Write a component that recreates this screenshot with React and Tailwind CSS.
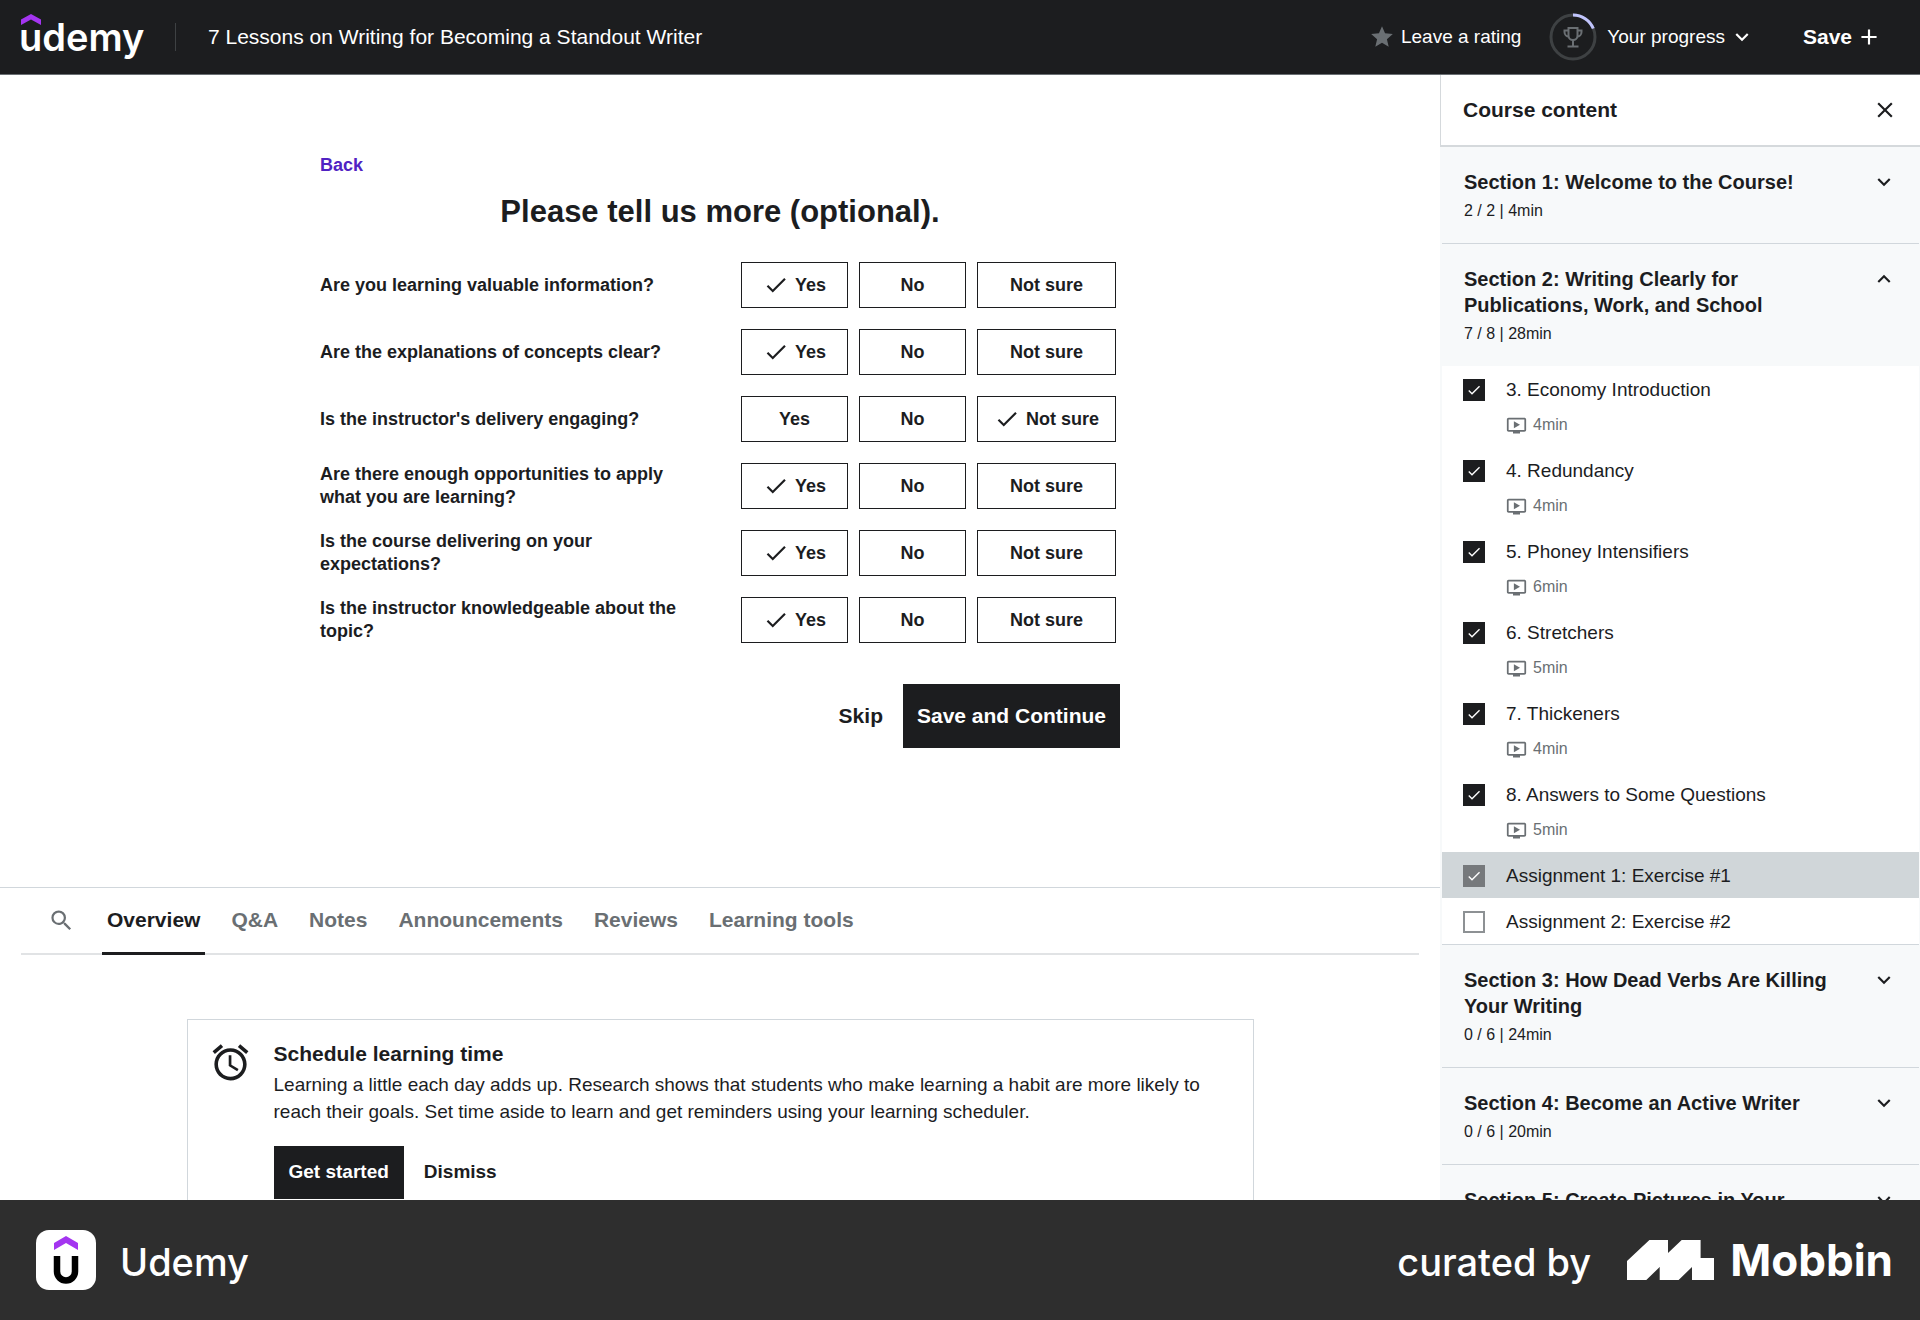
import { useState } from 'react'
import {
  MdAdd,
  MdCheck,
  MdClose,
  MdExpandLess,
  MdExpandMore,
  MdOutlineAccessAlarm,
  MdOutlineOndemandVideo,
  MdSearch,
  MdStar,
} from 'react-icons/md'

const questions = [
  { text: 'Are you learning valuable information?', answer: 'Yes' },
  { text: 'Are the explanations of concepts clear?', answer: 'Yes' },
  { text: "Is the instructor's delivery engaging?", answer: 'Not sure' },
  { text: 'Are there enough opportunities to apply what you are learning?', answer: 'Yes' },
  { text: 'Is the course delivering on your expectations?', answer: 'Yes' },
  { text: 'Is the instructor knowledgeable about the topic?', answer: 'Yes' },
]

const options = ['Yes', 'No', 'Not sure']

const tabs = ['Overview', 'Q&A', 'Notes', 'Announcements', 'Reviews', 'Learning tools']

const sections = [
  { title: 'Section 1: Welcome to the Course!', summary: '2 / 2 | 4min' },
  {
    title: 'Section 2: Writing Clearly for Publications, Work, and School',
    summary: '7 / 8 | 28min',
    open: true,
    items: [
      { title: '3. Economy Introduction', duration: '4min', done: true },
      { title: '4. Redundancy', duration: '4min', done: true },
      { title: '5. Phoney Intensifiers', duration: '6min', done: true },
      { title: '6. Stretchers', duration: '5min', done: true },
      { title: '7. Thickeners', duration: '4min', done: true },
      { title: '8. Answers to Some Questions', duration: '5min', done: true },
      { title: 'Assignment 1: Exercise #1', done: true, current: true },
      { title: 'Assignment 2: Exercise #2', done: false },
    ],
  },
  { title: 'Section 3: How Dead Verbs Are Killing Your Writing', summary: '0 / 6 | 24min' },
  { title: 'Section 4: Become an Active Writer', summary: '0 / 6 | 20min' },
  { title: 'Section 5: Create Pictures in Your' },
]

function UdemyLogo() {
  return (
    <a href="#home" aria-label="Udemy" className="relative block w-[122px]">
      <svg className="absolute left-0 top-0 w-5 h-[11px]" viewBox="0 0 20 11" fill="#a435f0">
        <path d="M10 0L20 5.5V11L10 5.5L0 11V5.5Z" />
      </svg>
      <span className="block -ml-0.5 font-['Inter',sans-serif] text-[38px] leading-[46px] font-semibold text-white">
        udemy
      </span>
    </a>
  )
}

function ProgressRing() {
  return (
    <svg className="w-12 h-12" viewBox="0 0 48 48" fill="none">
      <circle cx="24" cy="24" r="22" stroke="#3e4143" strokeWidth="3" />
      <path d="M24 2A22 22 0 0 1 44.300 15.500" stroke="#c0c4fc" strokeWidth="3" />
      <g stroke="#6a6f73" strokeWidth="2">
        <path d="M19.500 15H28.500V22.500A4.500 4.500 0 0 1 19.500 22.500Z" />
        <path d="M19.500 17.500H15.500V19A4.500 4.500 0 0 0 20 23.500M28.500 17.500H32.500V19A4.500 4.500 0 0 1 28 23.500" />
        <path d="M24 27V33.500M18.500 33.500H29.500" />
      </g>
    </svg>
  )
}

function Header() {
  return (
    <header className="flex items-center h-[75px] shrink-0 pl-[21px] pr-[38px] bg-[#1c1d1f] border-b border-[#6a6f73] text-white">
      <UdemyLogo />
      <div className="w-px h-7 mx-8 bg-[#3e4143]" />
      <h1 className="text-[21px] leading-7">
        <a href="#course">7 Lessons on Writing for Becoming a Standout Writer</a>
      </h1>
      <div className="flex items-center ml-auto">
        <button className="flex items-center gap-1.5 text-[19px]">
          <MdStar className="w-[26px] h-[26px] text-[#6a6f73]" />
          Leave a rating
        </button>
        <button className="flex items-center ml-7 text-[19px]">
          <ProgressRing />
          <span className="ml-2.5">Your progress</span>
          <MdExpandMore className="w-[26px] h-[26px] ml-1" />
        </button>
        <button className="flex items-center gap-1 ml-12 text-[21px] font-bold">
          Save
          <MdAdd className="w-[26px] h-[26px]" />
        </button>
      </div>
    </header>
  )
}

function QuestionRow({ question }) {
  const [answer, setAnswer] = useState(question.answer)

  return (
    <div className="flex items-center justify-between h-[46px]">
      <p className="w-[370px] text-[18px] leading-[23px] font-bold">{question.text}</p>
      <div className="flex gap-[11px] h-full">
        {options.map((option) => (
          <button
            key={option}
            onClick={() => setAnswer(option)}
            aria-pressed={answer === option}
            className={`flex items-center justify-center gap-1.5 border border-[#1c1d1f] text-[18px] font-bold ${
              option === 'Not sure' ? 'w-[139px]' : 'w-[107px]'
            }`}
          >
            {answer === option && <MdCheck className="w-[26px] h-[26px]" />}
            {option}
          </button>
        ))}
      </div>
    </div>
  )
}

function Survey() {
  return (
    <section className="w-full max-w-[800px] mx-auto pt-[77px] pb-[139px]">
      <button className="block text-[18px] leading-[26px] font-bold text-[#5022c3]">Back</button>
      <h2 className="mt-3.5 text-center text-[31px] leading-[40px] font-bold">Please tell us more (optional).</h2>
      <div className="flex flex-col gap-[21px] mt-[30px] pr-1">
        {questions.map((question) => (
          <QuestionRow key={question.text} question={question} />
        ))}
      </div>
      <div className="flex justify-end mt-[41px] text-[21px] font-bold">
        <button className="px-5">Skip</button>
        <button className="h-16 px-3.5 bg-[#1c1d1f] text-white">Save and Continue</button>
      </div>
    </section>
  )
}

function Tabs() {
  const [active, setActive] = useState('Overview')

  return (
    <div className="border-t border-[#d1d7dc] px-[21px]">
      <nav className="flex h-[67px] pl-[27px] border-b-2 border-[#e1e3e5] text-[#6a6f73]">
        <button aria-label="Search" className="pr-[27px]">
          <MdSearch className="w-[27px] h-[27px]" />
        </button>
        {tabs.map((tab) => (
          <button
            key={tab}
            onClick={() => setActive(tab)}
            className={`-mb-0.5 mr-[21px] px-[5px] border-b-[3px] text-[21px] font-bold ${
              active === tab ? 'border-[#1c1d1f] text-[#1c1d1f]' : 'border-transparent'
            }`}
          >
            {tab}
          </button>
        ))}
      </nav>
    </div>
  )
}

function ScheduleCard() {
  return (
    <div className="flex w-full max-w-[1067px] mx-auto mt-16 p-[21px] border border-[#d1d7dc]">
      <MdOutlineAccessAlarm className="shrink-0 w-[43px] h-[43px]" />
      <div className="ml-[22px]">
        <h3 className="text-[21px] leading-[26px] font-bold">Schedule learning time</h3>
        <p className="mt-1 text-[19px] leading-[27px]">
          Learning a little each day adds up. Research shows that students who make learning a habit are more likely to
          reach their goals. Set time aside to learn and get reminders using your learning scheduler.
        </p>
        <div className="flex mt-[21px] text-[19px] font-bold">
          <button className="h-[53px] px-[15px] bg-[#1c1d1f] text-white">Get started</button>
          <button className="px-5">Dismiss</button>
        </div>
      </div>
    </div>
  )
}

function CourseItem({ item }) {
  const [done, setDone] = useState(item.done)

  return (
    <li className={`pl-[21px] pt-[11px] pb-[9px] ${item.current ? 'bg-[#d0d6d9]' : 'bg-white'}`}>
      <label className="flex items-start gap-[21px]">
        <span className="relative mt-0.5 w-[22px] h-[22px] shrink-0">
          <input
            type="checkbox"
            checked={done}
            onChange={() => setDone(!done)}
            className={`block appearance-none w-[22px] h-[22px] border-2 ${
              item.current
                ? 'bg-[#76797c] border-[#76797c]'
                : 'border-[#8d9194] checked:bg-[#1c1d1f] checked:border-[#1c1d1f]'
            }`}
          />
          {done && <MdCheck className="absolute left-[3px] top-[3px] w-4 h-4 text-white pointer-events-none" />}
        </span>
        <span className="block">
          <span className="block text-[19px] leading-[26px]">{item.title}</span>
          {item.duration && (
            <span className="flex items-center gap-1.5 mt-[9px] text-[16px] leading-[26px] text-[#6a6f73]">
              <MdOutlineOndemandVideo className="w-[21px] h-[21px]" />
              {item.duration}
            </span>
          )}
        </span>
      </label>
    </li>
  )
}

function CourseSection({ section }) {
  const [open, setOpen] = useState(Boolean(section.open))

  return (
    <div className="border-b border-[#d1d7dc]">
      <button onClick={() => setOpen(!open)} className="flex w-full px-[22px] py-[22px] bg-[#f7f9fa] text-left">
        <span className="block flex-1">
          <span className="block text-[20px] leading-[26px] font-bold">{section.title}</span>
          {section.summary && <span className="block mt-1.5 text-[16px] leading-5">{section.summary}</span>}
        </span>
        {open ? (
          <MdExpandLess className="w-[26px] h-[26px] ml-8" />
        ) : (
          <MdExpandMore className="w-[26px] h-[26px] ml-8" />
        )}
      </button>
      {open && section.items && (
        <ul>
          {section.items.map((item) => (
            <CourseItem key={item.title} item={item} />
          ))}
        </ul>
      )}
    </div>
  )
}

function Sidebar() {
  return (
    <aside className="w-1/4 shrink-0 bg-[#f7f9fa] overflow-hidden">
      <div className="flex items-center justify-between h-[72px] px-[22px] bg-white border-l border-b-2 border-[#d5d9dc]">
        <h2 className="text-[21px] font-bold">Course content</h2>
        <button aria-label="Close course content">
          <MdClose className="w-[26px] h-[26px]" />
        </button>
      </div>
      <div className="pl-0.5 pr-px">
        {sections.map((section) => (
          <CourseSection key={section.title} section={section} />
        ))}
      </div>
    </aside>
  )
}

function Footer() {
  return (
    <footer className="flex items-center justify-between h-[120px] shrink-0 pl-9 pr-[27px] bg-[#2e2e2e] text-white font-['Inter',sans-serif]">
      <div className="flex items-center gap-6">
        <svg className="w-[60px] h-[60px]" viewBox="0 0 60 60">
          <rect width="60" height="60" rx="13" fill="#fff" />
          <path d="M30 6L42 13V20L30 13L18 20V13Z" fill="#a435f0" />
          <path d="M21 26V41.500A9 9 0 0 0 39 41.500V26" fill="none" stroke="#000" strokeWidth="6.500" />
        </svg>
        <span className="pt-1 text-[38px] leading-[60px] font-medium">Udemy</span>
      </div>
      <div className="flex items-center">
        <span className="pt-1 text-[38px] leading-[60px] font-medium">curated by</span>
        <svg className="w-[87px] h-10 ml-9" viewBox="0 0 87 40" fill="#fff">
          <path d="M0 21L22.400 0H41V13L54.700 0H73.600V18H87V40H65V27L51.600 40H32.700V27L19.300 40H0Z" />
        </svg>
        <span className="ml-4 text-[44px] leading-[60px] font-bold">Mobbin</span>
      </div>
    </footer>
  )
}

export default function App() {
  return (
    <div className="flex flex-col h-screen overflow-hidden bg-white text-[#1c1d1f] font-['Liberation_Sans',sans-serif]">
      <Header />
      <div className="flex flex-1 min-h-0">
        <main className="flex-1 min-w-0 overflow-hidden">
          <Survey />
          <Tabs />
          <ScheduleCard />
        </main>
        <Sidebar />
      </div>
      <Footer />
    </div>
  )
}
